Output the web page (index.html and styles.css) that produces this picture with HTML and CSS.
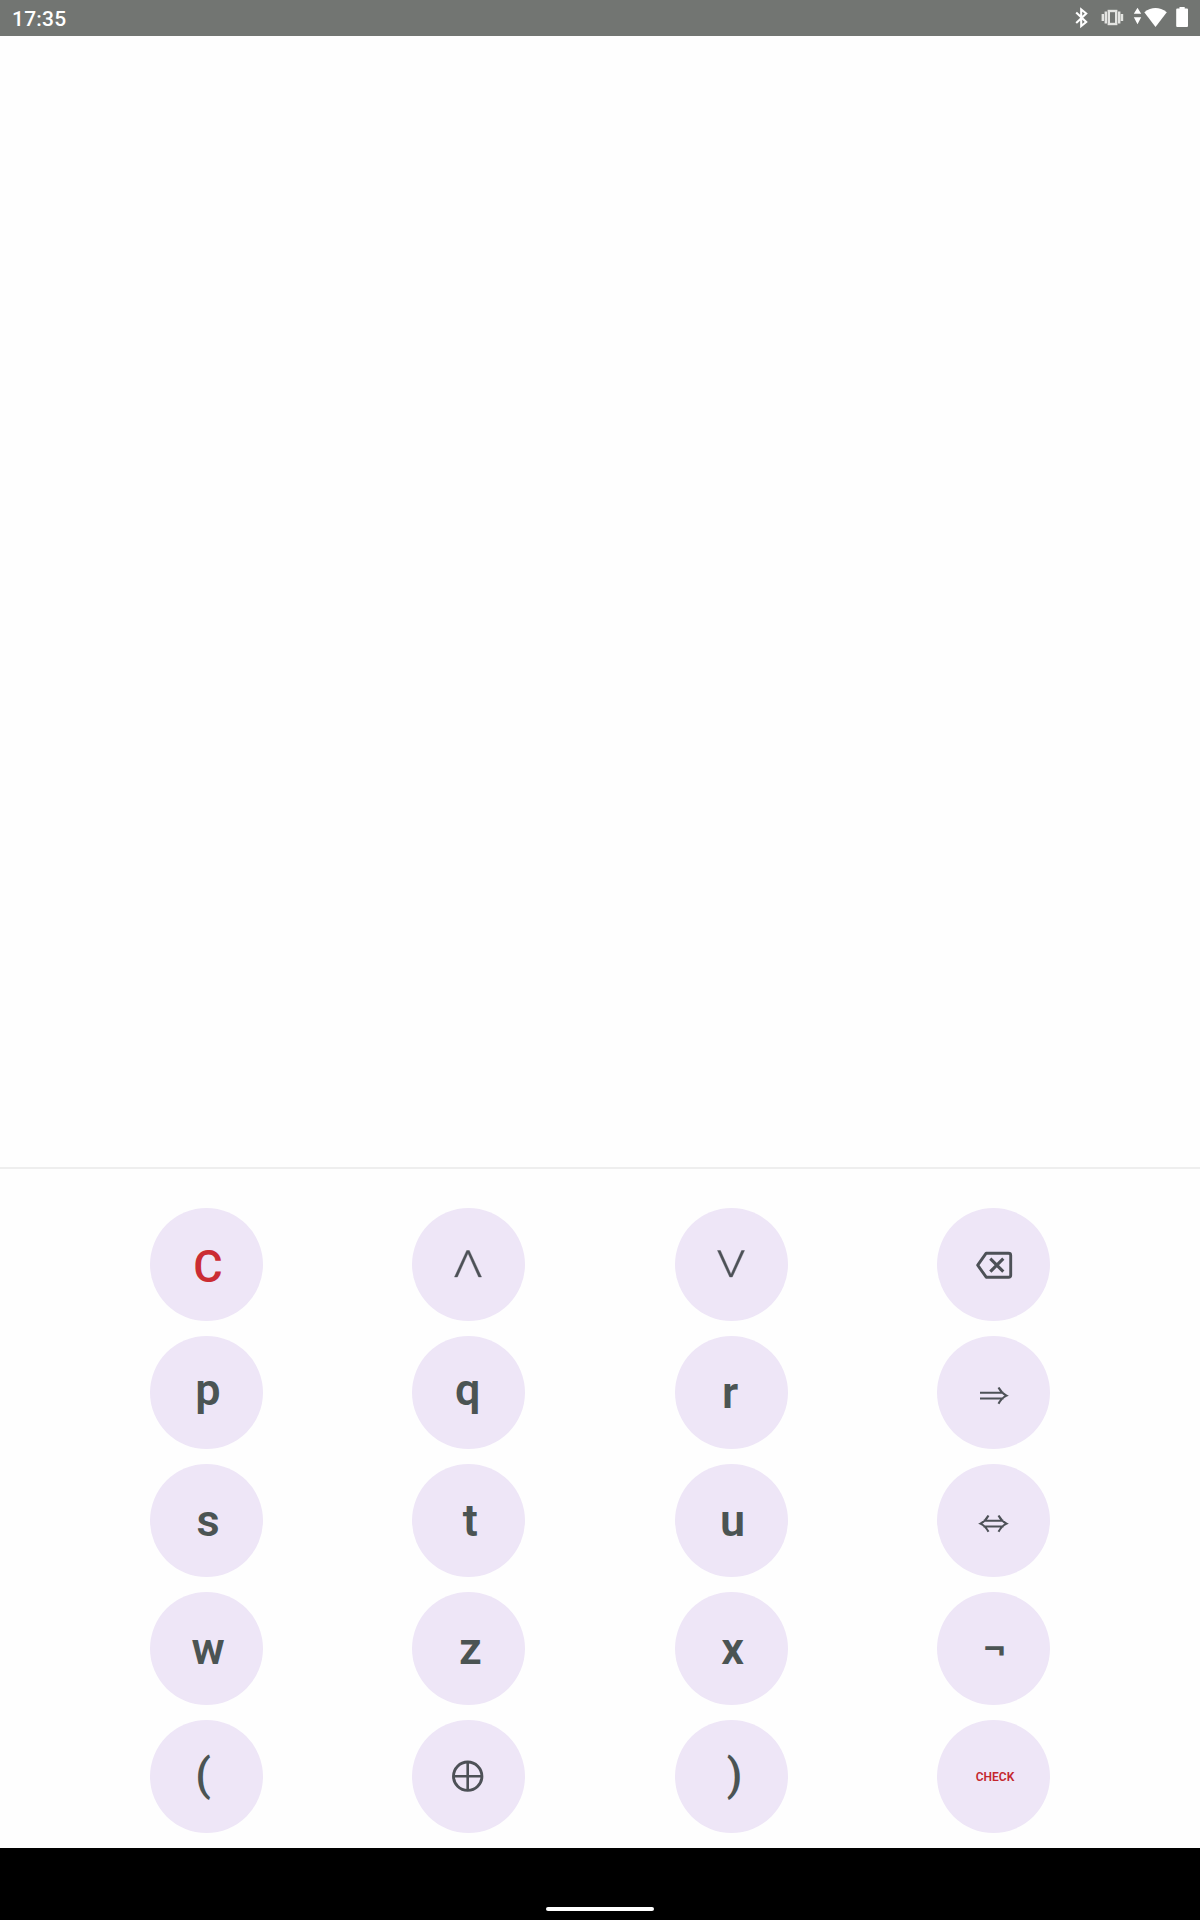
FILE: index.html
```html
<!DOCTYPE html>
<html lang="en">
<head>
    <meta charset="UTF-8">
    <meta name="viewport" content="width=device-width, initial-scale=1.0">
    <title>Logic Calculator</title>
    <link rel="stylesheet" href="styles.css">
</head>
<body>

    <header class="status-bar">
        <span class="clock">17:35</span>
        <svg class="status-icons" width="140" height="36" viewBox="0 0 140 36">
            <!-- bluetooth -->
            <path d="M16.200 12.500l10 9.500-5 4V9.500l5 4-10 9.500" fill="none" stroke="#fff" stroke-width="2.100"/>
            <!-- vibrate -->
            <g fill="none" stroke="#e3e4e1" stroke-width="2.400">
                <rect x="48.800" y="11" width="7.400" height="13"/>
                <path d="M45.800 11.500v12M59.200 11.500v12M42.800 14v7M62 14v7"/>
            </g>
            <!-- wifi -->
            <path d="M77.500 7.800l3.700 6h-7.400zM77.500 24.200l3.700-7h-7.400z" fill="#fff"/>
            <path d="M84.300 12.200Q95.500 3.800 106.800 12.200L95.500 27z" fill="#fff"/>
            <!-- battery -->
            <path d="M117.200 8.500h2.300V7h5.200v1.500h2.300q1 0 1 1V26q0 1-1 1h-9.800q-1 0-1-1V9.500q0-1 1-1z" fill="#fff"/>
        </svg>
    </header>

    <main class="display"></main>

    <section class="keypad">
        <button class="key clear">C</button>
        <button class="key" aria-label="and">
            <svg width="113" height="113"><path class="wedge" d="M42.500 69L54.700 42.500H57.300L69.500 69H66.600L56 45.300 45.400 69z" /></svg>
        </button>
        <button class="key" aria-label="or">
            <svg width="113" height="113"><path class="wedge" d="M42.500 42.500L54.700 69H57.300L69.500 42.500H66.600L56 66.200 45.400 42.500z" /></svg>
        </button>
        <button class="key" aria-label="backspace">
            <svg width="113" height="113">
                <path d="M49.200 45.200H71.500Q73.700 45.200 73.700 47.200V67.200Q73.700 69.200 71.500 69.200H49.200L40.700 57.200z" stroke-width="2.900" stroke-linejoin="round"/>
                <path d="M53.300 50.700l13 13M66.300 50.700l-13 13" stroke-width="3.100"/>
            </svg>
        </button>

        <button class="key tail">p</button>
        <button class="key tail left">q</button>
        <button class="key left">r</button>
        <button class="key" aria-label="implies">
            <svg width="113" height="113"><path class="thin" d="M43 56.700H66.500M43 62.500H66.500M61.500 51.500Q64.500 57 69.500 59.600Q64.500 62 61.500 67.800" /></svg>
        </button>

        <button class="key">s</button>
        <button class="key">t</button>
        <button class="key">u</button>
        <button class="key" aria-label="if and only if">
            <svg width="113" height="113"><path class="thin" d="M46.500 56.700H66.500M46.500 62.500H66.500M61.500 51.500Q64.500 57 69.500 59.600Q64.500 62 61.500 67.800M51.500 51.500Q48.500 57 43.500 59.600Q48.500 62 51.500 67.800" /></svg>
        </button>

        <button class="key">w</button>
        <button class="key">z</button>
        <button class="key">x</button>
        <button class="key">¬</button>

        <button class="key paren open">(</button>
        <button class="key" aria-label="xor">
            <svg width="113" height="113">
                <circle cx="55.700" cy="56.200" r="14.200" stroke-width="2.900"/>
                <path d="M55.700 42V70.500M41.500 56.200H70" stroke-width="2.600"/>
            </svg>
        </button>
        <button class="key paren close">)</button>
        <button class="key check">CHECK</button>
    </section>

    <footer class="nav-bar">
        <div class="handle"></div>
    </footer>

</body>
</html>
```
FILE: styles.css
```css
* {
    box-sizing: border-box;
    margin: 0;
    padding: 0;
    font-family: Roboto, sans-serif;
}

body {
    display: flex;
    flex-direction: column;
    height: 1920px;
    background-color: #fefefe;
}

.status-bar {
    display: flex;
    justify-content: space-between;
    align-items: center;
    height: 36px;
    padding-left: 12px;
    background-color: #727572;
    color: #fff;
}

.clock {
    padding-top: 1px;
    font-size: 21px;
    font-weight: 500;
    letter-spacing: 0.2px;
}

.display {
    flex: 1;
    border-bottom: 2px solid #eeeeee;
}

.keypad {
    display: grid;
    grid-template-columns: repeat(4, 113px);
    justify-content: space-between;
    row-gap: 15px;
    padding: 39px 150px 15px;
}

.key {
    display: flex;
    justify-content: center;
    align-items: center;
    width: 113px;
    height: 113px;
    padding-left: 3px;
    border: none;
    border-radius: 50%;
    background-color: #eee6f7;
    color: #4b5453;
    font-size: 45px;
    font-weight: 600;
    cursor: pointer;
}

.key svg {
    flex-shrink: 0;
    margin-left: -3px;
    fill: none;
    stroke: #4d5157;
    stroke-width: 2.5;
}

.key .thin {
    stroke-width: 2.1;
}

.key .wedge {
    fill: #4d5157;
    stroke-width: 0.4;
}

.clear {
    padding-top: 3px;
    color: #cb2c33;
    font-weight: 500;
}

/* keys with a descender sit a little higher */
.tail {
    padding-bottom: 6px;
}

.left {
    padding-left: 0;
    padding-right: 2px;
}

.paren {
    padding-bottom: 5px;
    font-weight: 500;
}

.open {
    padding-left: 0;
    padding-right: 7px;
}

.close {
    padding-left: 7px;
}

.check {
    color: #c4262e;
    font-size: 12px;
}

.nav-bar {
    display: flex;
    justify-content: center;
    align-items: flex-end;
    height: 72px;
    padding-bottom: 9px;
    background-color: #000;
}

.handle {
    width: 108px;
    height: 4px;
    border-radius: 2px;
    background-color: #fff;
}
```
